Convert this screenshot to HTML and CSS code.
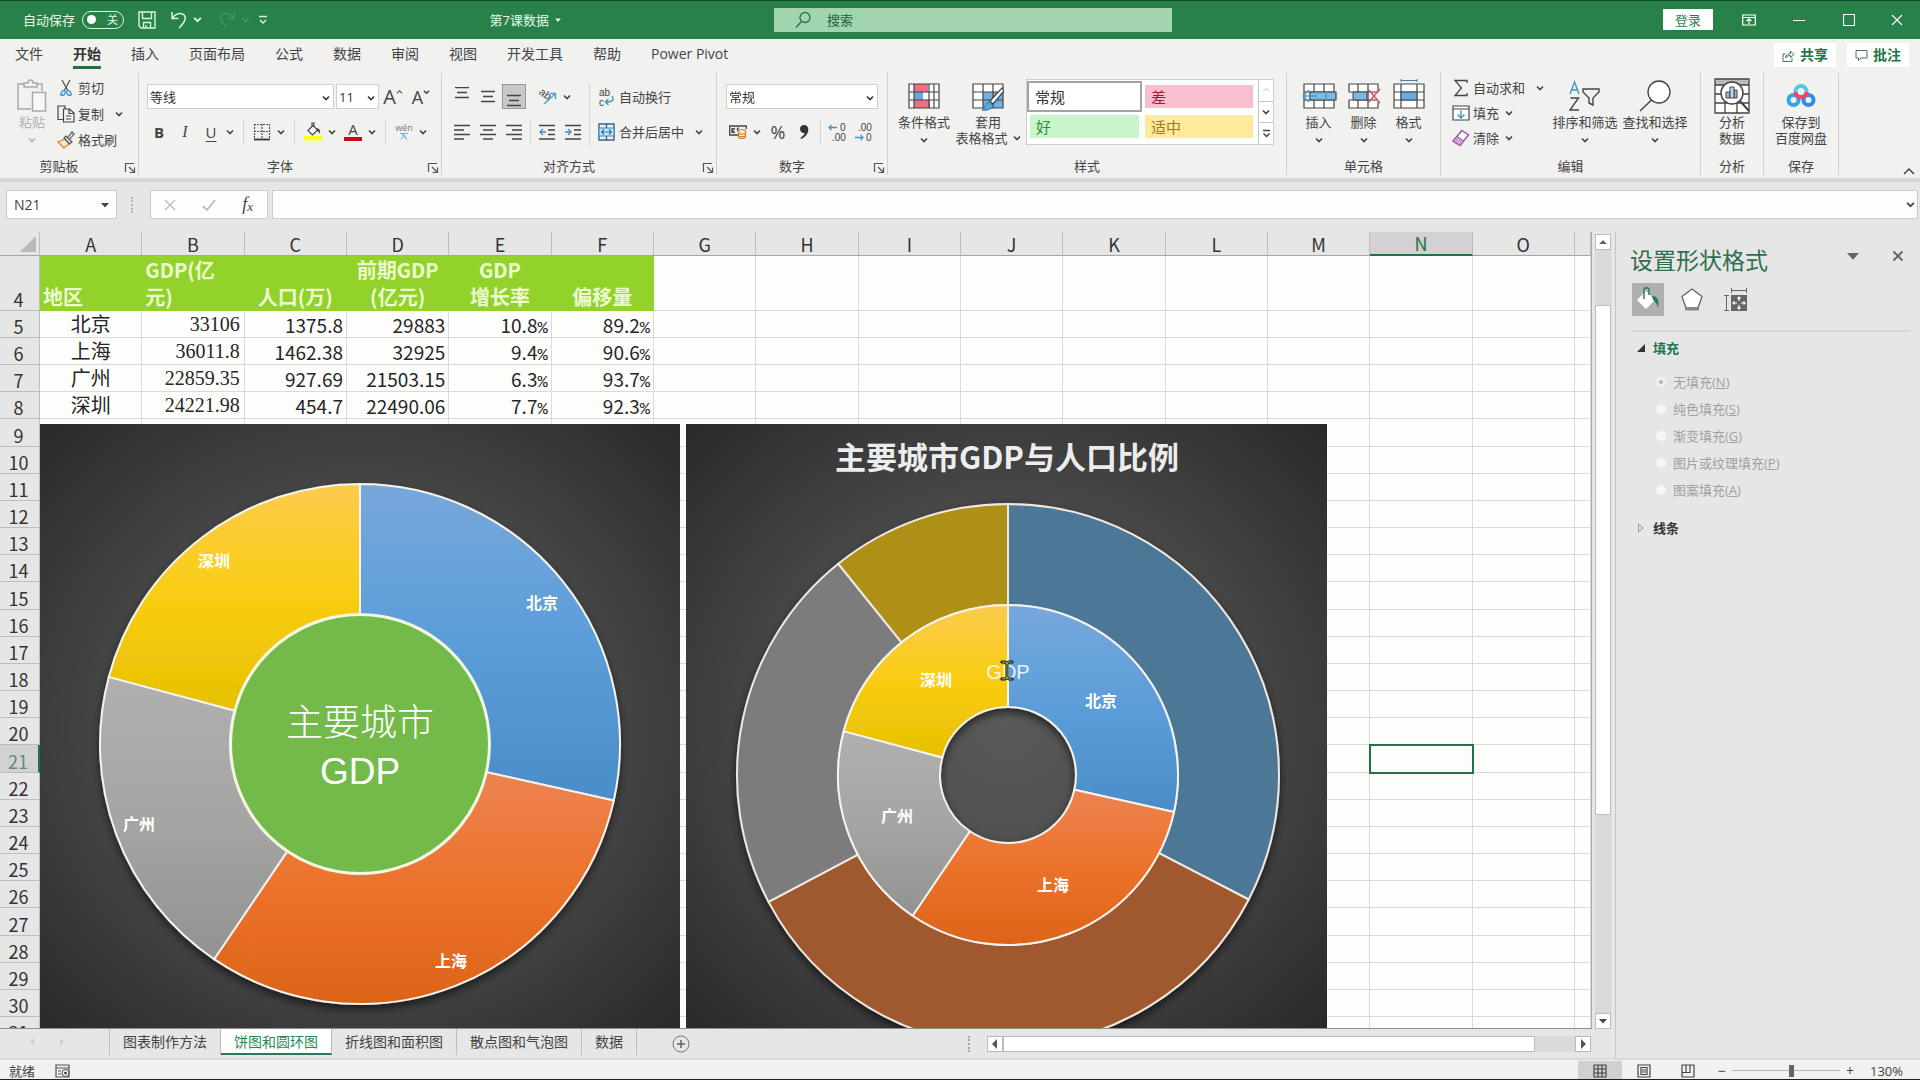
FILE: index.html
```html
<!DOCTYPE html>
<html lang="zh-CN">
<head>
<meta charset="utf-8">
<title>第7课数据</title>
<link rel="stylesheet" href="styles.css">
</head>
<body>
<svg class="sprite" aria-hidden="true">
  <symbol id="caret" viewBox="0 0 8 8"><path d="M1 2.500 4 5.500 7 2.500" fill="none" stroke="currentColor" stroke-width="1.600"/></symbol>
  <symbol id="tri" viewBox="0 0 8 8"><path d="M0 2h8L4 6.500z" fill="currentColor"/></symbol>
  <symbol id="launch" viewBox="0 0 12 12"><path d="M1.500 10V1.500H10M5 5l5 5M10.500 5.500v5h-5" fill="none" stroke="#555" stroke-width="1.200"/></symbol>
  <symbol id="al-top" viewBox="0 0 16 16"><path d="M1 2.500h14M3 7.500h10M1 12.500h14" stroke="#444" stroke-width="1.300"/></symbol>
</svg>

<header class="titlebar">
  <div class="quick">
    <label for="autosave">自动保存</label>
    <span class="toggle"><input type="checkbox" id="autosave"><span>关</span></span>
    <button class="tb-btn" aria-label="保存"><svg width="18" height="18" viewBox="0 0 18 18"><path d="M1 1h16v16H3l-2-2zM4.500 1v6.500h9V1M5.500 17v-5.500h7V17M8 17v-3" fill="none" stroke="#d9f5e0" stroke-width="1.400"/></svg></button>
    <button class="tb-btn undo" aria-label="撤消"><svg width="18" height="18" viewBox="0 0 18 18"><path d="M2 1v6.500h6.500M2 7.500C5 3 10 1 13.500 3.500c3.500 3 1.500 8-4.500 13.500" fill="none" stroke="#d9f5e0" stroke-width="1.500"/></svg><svg width="9" height="9"><use href="#caret"/></svg></button>
    <button class="tb-btn redo" aria-label="恢复" disabled><svg width="18" height="18" viewBox="0 0 18 18"><path d="M16 1v6.500H9.500M16 7.500C13 3 8 1 4.500 3.500c-3.500 3-1.500 8 4.500 13.500" fill="none" stroke="#3f9560" stroke-width="1.500"/></svg><svg width="9" height="9"><use href="#caret"/></svg></button>
    <button class="tb-btn" aria-label="自定义"><svg width="10" height="10" viewBox="0 0 10 10"><path d="M1 1.500h8M2 5l3 3 3-3" fill="none" stroke="#d9f5e0" stroke-width="1.400"/></svg></button>
  </div>
  <button class="doc">第7课数据 <svg width="6" height="6"><use href="#tri"/></svg></button>
  <div class="search">
    <svg width="16" height="18" viewBox="0 0 16 18"><circle cx="10" cy="6.500" r="5" fill="none" stroke="#2f6f48" stroke-width="1.300"/><path d="M6.500 10.500 1 16.500" stroke="#2f6f48" stroke-width="1.300"/></svg>
    <input type="search" placeholder="搜索" aria-label="搜索">
  </div>
  <div class="window">
    <button class="login">登录</button>
    <button class="win" aria-label="功能区显示选项"><svg width="14" height="12" viewBox="0 0 14 12"><path d="M.700 1h12.600v10H.700zM.700 3.500h12.600M7 10V5M4.500 7 7 4.800 9.500 7" fill="none" stroke="#fff" stroke-width="1.200"/></svg></button>
    <button class="win" aria-label="最小化"><svg width="12" height="12"><path d="M0 6.500h12" stroke="#fff"/></svg></button>
    <button class="win" aria-label="最大化"><svg width="12" height="12"><path d="M.5.5h11v11H.5z" fill="none" stroke="#fff" stroke-width="1.200"/></svg></button>
    <button class="win" aria-label="关闭"><svg width="12" height="12"><path d="M1 1l10 10M11 1 1 11" stroke="#fff" stroke-width="1.200"/></svg></button>
  </div>
</header>

<nav class="tabs">
  <a href="#">文件</a><a href="#" class="on">开始</a><a href="#">插入</a><a href="#">页面布局</a><a href="#">公式</a><a href="#">数据</a><a href="#">审阅</a><a href="#">视图</a><a href="#">开发工具</a><a href="#">帮助</a><a href="#">Power Pivot</a>
  <div class="collab">
    <button><svg width="13" height="13" viewBox="0 0 13 13"><path d="M3.500 5H1v7.500h9V9M3.500 9c.5-3 2.500-4.500 5-4.500V2L12 5.500 8.500 8.500V6.500C6.500 6.500 5 7 3.500 9z" fill="none" stroke="#44795a"/></svg>共享</button>
    <button><svg width="13" height="13" viewBox="0 0 13 13"><path d="M1 1.500h11v7.500H6L3.500 11.500V9H1z" fill="none" stroke="#44795a"/></svg>批注</button>
  </div>
</nav>

<section class="ribbon">
  <div class="group g-clip">
    <div class="body high">
      <button class="big off"><svg width="32" height="34" viewBox="0 0 32 34"><path d="M8 5H2v25h13M20 5h6v7M8 8V4h4c0-4 5-4 5 0h4v4z" fill="none" stroke="#a9a9a9" stroke-width="1.500"/><path d="M16.500 13.500h13V32h-13z" fill="#f7f7f7" stroke="#a9a9a9" stroke-width="1.500"/></svg><span>粘贴</span><svg width="8" height="16" class="c"><use href="#caret"/></svg></button>
      <div class="stack">
        <button><svg width="18" height="18" viewBox="0 0 18 18"><path d="M5 1l6 11M13 1 7 12" stroke="#555" stroke-width="1.300"/><path d="M7.500 11.500a2.500 2.500 0 1 1-4 4l1.500-3.500zM10.500 11.500a2.500 2.500 0 1 0 4 4l-1.500-3.500z" fill="#cfe5f5" stroke="#3f8fcb" stroke-width="1.200"/></svg>剪切</button>
        <button><svg width="18" height="18" viewBox="0 0 18 18"><path d="M6 14.500H1V1h7v3M6.500 4h6l4.500 4v9H6.500zM12 4v4.500h5M9 11h5M9 14h5" fill="none" stroke="#444" stroke-width="1.200"/></svg>复制<svg width="8" height="8" class="far"><use href="#caret"/></svg></button>
        <button><svg width="18" height="18" viewBox="0 0 18 18"><path d="M1 11l7-3 4 5-5 4z" fill="#fbe7c4" stroke="#d08a2e" stroke-width="1.300"/><path d="M7 7l2-2 6 6-2.500 2zM11 6l4-5 2 2-4 5" fill="#ddd" stroke="#555" stroke-width="1.200"/></svg>格式刷</button>
      </div>
    </div>
    <div class="cap"><span>剪贴板</span><svg width="12" height="12"><use href="#launch"/></svg></div>
  </div>

  <div class="group g-font">
    <div class="body rows">
      <div class="row">
        <span class="combo face"><select aria-label="字体"><option>等线</option></select><svg width="8" height="8"><use href="#caret"/></svg></span>
        <span class="combo size"><select aria-label="字号"><option>11</option></select><svg width="8" height="8"><use href="#caret"/></svg></span>
        <button class="ib glyph l" aria-label="增大字号">A<svg width="7" height="8" viewBox="0 0 8 8"><path d="M1 5.500 4 2.500 7 5.500" fill="none" stroke="#555" stroke-width="1.300"/></svg></button>
        <button class="ib glyph" aria-label="减小字号">A<svg width="7" height="8"><use href="#caret"/></svg></button>
      </div>
      <div class="row">
        <button class="ib bold">B</button><button class="ib ital">I</button><button class="ib und">U</button><button class="cb" aria-label="下划线选项"><svg width="8" height="8"><use href="#caret"/></svg></button>
        <i class="sep"></i>
        <button class="ib" aria-label="边框"><svg width="18" height="18" viewBox="0 0 18 18"><path d="M1.500 1v15M16.500 1v15M1 1.500h16M9 1v15M1 8.500h16" stroke="#555" stroke-width="1.200" stroke-dasharray="2 1"/><path d="M1 16.500h16" stroke="#333" stroke-width="1.800"/></svg></button><button class="cb" aria-label="边框选项"><svg width="8" height="8"><use href="#caret"/></svg></button>
        <i class="sep"></i>
        <button class="ib" aria-label="填充颜色"><svg width="18" height="19" viewBox="0 0 18 19"><path d="M4 8.500 9 3.500l4.500 4.500-5 5zM8 5V1h2v4" fill="#fff" stroke="#444" stroke-width="1.200"/><path d="M13 6c3 1 3.500 3 3 6-1-2-2-3-3-3z" fill="#444"/><path d="M0 14h18v4.500H0z" fill="#fdfd1c"/></svg></button><button class="cb" aria-label="填充颜色选项"><svg width="8" height="8"><use href="#caret"/></svg></button>
        <button class="ib color" aria-label="字体颜色">A</button><button class="cb" aria-label="字体颜色选项"><svg width="8" height="8"><use href="#caret"/></svg></button>
        <i class="sep"></i>
        <button class="ib wen" aria-label="拼音指南">wén<svg width="10" height="8" viewBox="0 0 10 8"><path d="M1 1.500h8M2 7.500l3-5 3 5M3 2l4 5" stroke="#72b5d8" fill="none"/></svg></button><button class="cb" aria-label="拼音选项"><svg width="8" height="8"><use href="#caret"/></svg></button>
      </div>
    </div>
    <div class="cap"><span>字体</span><svg width="12" height="12"><use href="#launch"/></svg></div>
  </div>

  <div class="group g-align">
    <div class="body">
      <div class="rows">
        <div class="row">
          <button class="ib" aria-label="顶端对齐"><svg width="16" height="20"><use href="#al-top" y="-4"/></svg></button>
          <button class="ib" aria-label="垂直居中"><svg width="16" height="16"><use href="#al-top"/></svg></button>
          <button class="ib pressed" aria-label="底端对齐"><svg width="16" height="20"><use href="#al-top" y="4"/></svg></button>
          <button class="ib orient" aria-label="方向"><svg class="lettered" width="20" height="18" viewBox="0 0 20 18"><text x="1" y="9" font-size="11" transform="rotate(35 6 6)">ab</text><path d="M6 16 17 6M12 5.500h5.500V11" fill="none" stroke="#4da3c9" stroke-width="1.400"/></svg></button><button class="cb" aria-label="方向选项"><svg width="8" height="8"><use href="#caret"/></svg></button>
        </div>
        <div class="row">
          <button class="ib" aria-label="左对齐"><svg width="16" height="16"><path d="M0 1.500h16M0 6h10M0 10.500h16M0 15h10" stroke="#444" stroke-width="1.300"/></svg></button>
          <button class="ib" aria-label="居中"><svg width="16" height="16"><path d="M0 1.500h16M3 6h10M0 10.500h16M3 15h10" stroke="#444" stroke-width="1.300"/></svg></button>
          <button class="ib" aria-label="右对齐"><svg width="16" height="16"><path d="M0 1.500h16M6 6h10M0 10.500h16M6 15h10" stroke="#444" stroke-width="1.300"/></svg></button>
          <i class="sep tight"></i>
          <button class="ib" aria-label="减少缩进量"><svg width="16" height="16"><path d="M0 1.500h16M9 6h7M9 10.500h7M0 15h16" stroke="#444" stroke-width="1.300"/><path d="M7 8H1M4 5 1 8l3 3" stroke="#3f97c4" stroke-width="1.400" fill="none"/></svg></button>
          <button class="ib" aria-label="增加缩进量"><svg width="16" height="16"><path d="M0 1.500h16M9 6h7M9 10.500h7M0 15h16" stroke="#444" stroke-width="1.300"/><path d="M0 8h6M3 5l3 3-3 3" stroke="#3f97c4" stroke-width="1.400" fill="none"/></svg></button>
        </div>
      </div>
      <i class="sep tall"></i>
      <div class="rows">
        <button class="wide"><svg class="lettered" width="17" height="20" viewBox="0 0 17 20"><text x="1" y="9" font-size="10">ab</text><text x="1" y="19" font-size="10">c</text><path d="M14 9c3 5-1 6-6 6M10.500 12l-3 3 3 3" fill="none" stroke="#3f97c4" stroke-width="1.400"/></svg>自动换行</button>
        <button class="wide"><svg width="17" height="18" viewBox="0 0 17 18"><path d="M1 1h15v16H1zM8.500 1v4M8.500 13v4" fill="none" stroke="#3b6580" stroke-width="1.400"/><path d="M1 5h15v8H1z" fill="#cfe8f6" stroke="#2e85b5"/><path d="M3.500 9h10M6 6.500 3.500 9 6 11.500M11 6.500 13.500 9 11 11.500" fill="none" stroke="#2477a5" stroke-width="1.200"/></svg>合并后居中<svg width="8" height="8" class="far"><use href="#caret"/></svg></button>
      </div>
    </div>
    <div class="cap"><span>对齐方式</span><svg width="12" height="12"><use href="#launch"/></svg></div>
  </div>

  <div class="group g-num">
    <div class="body rows">
      <div class="row"><span class="combo fmt"><select aria-label="数字格式"><option>常规</option></select><svg width="8" height="8"><use href="#caret"/></svg></span></div>
      <div class="row">
        <button class="ib" aria-label="会计数字格式"><svg width="18" height="17" viewBox="0 0 18 17"><path d="M9 12H.700V3h16.600v3M6 5.500c-3 0-3 4 0 4M10 5c-2 0-2 2-1 3M3 5v5" fill="none" stroke="#444" stroke-width="1.300"/><path d="M9.500 8c0-2 7-2 7 0v6c0 2-7 2-7 0zM9.500 10c1 1.500 6 1.500 7 0M9.500 12.500c1 1.500 6 1.500 7 0" fill="#fbe3bf" stroke="#cf8430" stroke-width="1.200"/></svg></button><button class="cb" aria-label="会计格式选项"><svg width="8" height="8"><use href="#caret"/></svg></button>
        <button class="ib pc">%</button>
        <button class="ib" aria-label="千位分隔样式"><svg width="10" height="16" viewBox="0 0 10 16"><path d="M5 1c3 0 4.500 2 4.300 5C9 10 6 13.500 2 15l-.5-1.200C4 12 5.500 10.500 5.500 9 3 9.200 1 7.500 1 5s1.800-4 4-4z" fill="#333"/></svg></button>
        <i class="sep tight"></i>
        <button class="ib" aria-label="增加小数位数"><svg class="lettered" width="18" height="20" viewBox="0 0 18 20"><text x="12" y="9" font-size="10">0</text><text x="4" y="19" font-size="10">.00</text><path d="M9 5.500H1M3.500 3 1 5.500 3.500 8" fill="none" stroke="#3f97c4" stroke-width="1.300"/></svg></button>
        <button class="ib" aria-label="减少小数位数"><svg class="lettered" width="18" height="20" viewBox="0 0 18 20"><text x="4" y="9" font-size="10">.00</text><text x="12" y="19" font-size="10">0</text><path d="M1 15.500h8M6.500 13 9 15.500 6.500 18" fill="none" stroke="#3f97c4" stroke-width="1.300"/></svg></button>
      </div>
    </div>
    <div class="cap"><span>数字</span><svg width="12" height="12"><use href="#launch"/></svg></div>
  </div>

  <div class="group g-style">
    <div class="body high">
      <button class="big"><svg width="32" height="26" viewBox="0 0 32 26"><path d="M1 1h30v24H1z" fill="#fff"/><path d="M6 1h14v8H6zM6 17h16v8H6z" fill="#ef7083"/><path d="M6 9h9v8H6z" fill="#6da9dc"/><path d="M1 1h30v24H1zM1 9h30M1 17h30M6 1v24M21 1v24M26 1v24" fill="none" stroke="#444" stroke-width="1.200"/></svg><span>条件格式</span><svg width="8" height="16" class="c"><use href="#caret"/></svg></button>
      <button class="big"><svg width="32" height="30" viewBox="0 0 32 30"><path d="M1 3h30v24H1z" fill="#fff"/><path d="M11 11h20v16H11z" fill="#72b0e2"/><path d="M1 3h30v24H1zM1 11h30M1 19h30M11 3v24M21 3v24" fill="none" stroke="#444" stroke-width="1.200"/><path d="M18 20 30 7l2 3-11 13z" fill="#fff" stroke="#444" stroke-width="1.200"/><path d="M10 29c3 0 2-6 7-8l4 3c0 4-6 6-11 5z" fill="#5aa5dc" stroke="#2d77ae"/></svg><span>套用</span><span>表格格式<svg width="8" height="8"><use href="#caret"/></svg></span></button>
      <div class="gallery">
        <div class="styles"><button class="normal">常规</button><button class="bad">差</button><button class="good">好</button><button class="neutral">适中</button></div>
        <div class="more"><button disabled aria-label="上一行"><svg width="8" height="8" viewBox="0 0 8 8"><path d="M1 5.500 4 2.500 7 5.500" fill="none" stroke="#bbb"/></svg></button><button aria-label="下一行"><svg width="8" height="8"><use href="#caret"/></svg></button><button aria-label="其他"><svg width="9" height="10" viewBox="0 0 9 10"><path d="M1 1.500h7M1.500 4.500l3 3 3-3" fill="none" stroke="#444" stroke-width="1.500"/></svg></button></div>
      </div>
    </div>
    <div class="cap solo"><span>样式</span></div>
  </div>

  <div class="group g-cells">
    <div class="body high">
      <button class="big"><svg width="36" height="26" viewBox="0 0 36 26"><path d="M3 1h30v24H3zM3 9h30M3 17h30M13 1v24M23 1v24" fill="#fff" stroke="#444" stroke-width="1.200"/><path d="M9 9h26v8H9z" fill="#7cb8e6" stroke="#444" stroke-width="1.200"/><path d="M16 13H2M8 7l-6 6 6 6M25 9v8" fill="none" stroke="#4a9bc8" stroke-width="1.500"/></svg><span>插入</span><svg width="8" height="16" class="c"><use href="#caret"/></svg></button>
      <button class="big"><svg width="34" height="26" viewBox="0 0 34 26"><path d="M2 9V1h29v8M2 17v8h29v-6M11 1v24M21 1v24M2 9h29M2 17h29" fill="#fff" stroke="#444" stroke-width="1.200"/><path d="M6 9h14v8H6z" fill="#7cb8e6" stroke="#444"/><path d="M21 6l12 14M33 6 21 20" stroke="#e0576b" stroke-width="1.600"/></svg><span>删除</span><svg width="8" height="16" class="c"><use href="#caret"/></svg></button>
      <button class="big"><svg width="32" height="34" viewBox="0 0 32 34"><path d="M1 5h30v24H1zM1 13h30M1 21h30M8 5v24M24 5v24" fill="#fff" stroke="#444" stroke-width="1.200"/><path d="M8 13h16v8H8z" fill="#69abe0" stroke="#444"/><path d="M8 1.500h16M8 0v3M24 0v3" stroke="#4a7fa5"/></svg><span>格式</span><svg width="8" height="16" class="c"><use href="#caret"/></svg></button>
    </div>
    <div class="cap solo"><span>单元格</span></div>
  </div>

  <div class="group g-edit">
    <div class="body high">
      <div class="stack">
        <button><svg width="18" height="18" viewBox="0 0 18 18"><path d="M15 4V1.500H3L9.500 9 3 16.500h12V14" fill="none" stroke="#444" stroke-width="1.300"/></svg>自动求和<svg width="8" height="8" class="far"><use href="#caret"/></svg></button>
        <button><svg width="18" height="16" viewBox="0 0 18 16"><path d="M1 1h16v14H1zM1 4h16" fill="#fff" stroke="#444" stroke-width="1.200"/><path d="M9 5.500V13M5.500 9.500 9 13l3.500-3.500" fill="none" stroke="#3f97c4" stroke-width="1.400"/></svg>填充<svg width="8" height="8" class="near"><use href="#caret"/></svg></button>
        <button><svg width="18" height="18" viewBox="0 0 18 18"><path d="M10 1.500 16.500 6 8 16.500 1 12z" fill="#fff" stroke="#97539e" stroke-width="1.400"/><path d="M5 7.500 12 12 8 16.500 1 12z" fill="#d9a0de" stroke="#97539e"/></svg>清除<svg width="8" height="8" class="near"><use href="#caret"/></svg></button>
      </div>
      <button class="big lg"><svg width="34" height="30" viewBox="0 0 34 30"><path d="M2 13 6.500 1 11 13M3.500 9h6" fill="none" stroke="#3f97c4" stroke-width="1.400"/><path d="M2.500 17h8L2 29h9M15 8h16v3l-6 6v7l-4-2v-5l-6-6z" fill="none" stroke="#444" stroke-width="1.400"/></svg><span>排序和筛选</span><svg width="8" height="16" class="c"><use href="#caret"/></svg></button>
      <button class="big lg"><svg width="32" height="32" viewBox="0 0 32 32"><circle cx="20" cy="12" r="11" fill="#fff" stroke="#444" stroke-width="1.300"/><path d="M12.500 20 1 31" stroke="#444" stroke-width="1.500"/></svg><span>查找和选择</span><svg width="8" height="16" class="c"><use href="#caret"/></svg></button>
    </div>
    <div class="cap solo"><span>编辑</span></div>
  </div>

  <div class="group g-ana">
    <div class="body high"><button class="big"><svg width="36" height="36" viewBox="0 0 36 36"><path d="M1 1h34v34H1z" fill="#fff"/><path d="M1 1h34v6H1z" fill="#bbb"/><path d="M1 1h34v34H1zM1 7h34M1 16h34M1 25h34M11 7v28M23 7v28" fill="none" stroke="#444" stroke-width="1.300"/><circle cx="18" cy="15" r="11" fill="#fff" stroke="#444" stroke-width="1.500"/><path d="M12 20v-6h4v6zM20 20v-8h3v8z" fill="#8bbce0" stroke="#444"/><path d="M16 20V9h4v11z" fill="#b9d8ee" stroke="#444"/><path d="M26 23l9 10" stroke="#444" stroke-width="2"/></svg><span>分析</span><span>数据</span></button></div>
    <div class="cap solo"><span>分析</span></div>
  </div>
  <div class="group g-save">
    <div class="body high"><button class="big"><svg width="30" height="26" viewBox="0 0 30 26"><g fill="none" stroke-width="4"><circle cx="7.500" cy="17" r="5" stroke="#2da9e0"/><circle cx="22.500" cy="17" r="5" stroke="#2b8fe6"/><circle cx="15" cy="8.500" r="5.500" stroke="#52c8e8"/><path d="M9.500 9c0 7 11 7 11 0" stroke="#ea4a6a"/></g></svg><span>保存到</span><span>百度网盘</span></button></div>
    <div class="cap solo"><span>保存</span></div>
  </div>
  <button class="collapse" aria-label="折叠功能区"><svg width="12" height="8" viewBox="0 0 12 8"><path d="M1 7l5-5 5 5" fill="none" stroke="#444" stroke-width="1.500"/></svg></button>
</section>

<section class="formula">
  <div class="namebox"><input value="N21" aria-label="名称框"><svg width="8" height="8"><use href="#tri"/></svg></div>
  <span class="dots"></span>
  <div class="fx">
    <button aria-label="取消" disabled><svg width="12" height="12"><path d="M1 1l10 10M11 1 1 11" stroke="#bbb" stroke-width="1.400"/></svg></button>
    <button aria-label="输入" disabled><svg width="14" height="12"><path d="M1 7l4 4 8-10" fill="none" stroke="#bbb" stroke-width="1.800"/></svg></button>
    <button aria-label="插入函数"><em>f</em><small>x</small></button>
  </div>
  <div class="entry"><input aria-label="编辑栏"><svg width="9" height="9"><use href="#caret"/></svg></div>
</section>

<main class="work">
  <div class="book">
    <div class="sheet">
      <div class="canvas">
        <table class="grid">
          <colgroup id="cols"></colgroup>
          <thead><tr id="letters"></tr></thead>
          <tbody id="rows"></tbody>
        </table>
        <svg class="chart one" id="chart1" viewBox="0 0 640 604" role="img" aria-label="主要城市GDP"></svg>
        <svg class="chart two" id="chart2" viewBox="0 0 641 604" role="img" aria-label="主要城市GDP与人口比例"></svg>
      </div>
      <div class="vscroll"><button aria-label="向上"><svg width="8" height="8" viewBox="0 0 8 8"><path d="M0 6h8L4 2z" fill="#666"/></svg></button><div class="vtrack"><span></span></div><button aria-label="向下"><svg width="8" height="8"><use href="#tri"/></svg></button></div>
    </div>
    <div class="sheets">
      <div class="nav"><button disabled aria-label="上一张"><svg width="6" height="8"><path d="M5 0v8L1 4z" fill="#cfcfcf"/></svg></button><button disabled aria-label="下一张"><svg width="6" height="8"><path d="M1 0v8l4-4z" fill="#cfcfcf"/></svg></button></div>
      <div class="names"><a href="#">图表制作方法</a><a href="#" class="on">饼图和圆环图</a><a href="#">折线图和面积图</a><a href="#">散点图和气泡图</a><a href="#">数据</a></div>
      <button class="add" aria-label="新工作表"><svg width="18" height="18" viewBox="0 0 18 18"><circle cx="9" cy="9" r="8" fill="none" stroke="#777"/><path d="M9 5v8M5 9h8" stroke="#666" stroke-width="1.600"/></svg></button>
      <span class="dots"></span>
      <div class="hscroll"><button aria-label="向左"><svg width="8" height="10"><path d="M6 0v10L1 5z" fill="#555"/></svg></button><div class="htrack"><span></span></div><button aria-label="向右"><svg width="8" height="10"><path d="M2 0v10l5-5z" fill="#555"/></svg></button></div>
    </div>
  </div>

  <aside class="pane">
    <div class="pane-head"><h2>设置形状格式</h2><button aria-label="任务窗格选项"><svg width="12" height="12"><use href="#tri"/></svg></button><button aria-label="关闭窗格"><svg width="12" height="12"><path d="M1.500 1.500l9 9M10.500 1.500l-9 9" stroke="#666" stroke-width="2"/></svg></button></div>
    <div class="pane-tabs">
      <button class="on" aria-label="填充与线条"><svg width="26" height="26" viewBox="0 0 26 26"><path d="M2 13 11 4l9 9-9 9z" fill="#fff"/><path d="M9 12V3c0-3 5-3 5 0v5" fill="none" stroke="#2e7d57" stroke-width="1.500"/><path d="M17 9c5 0 8 3 6 12-1-4-3-7-5-8z" fill="#2e7d57"/></svg></button>
      <button aria-label="效果"><svg width="24" height="26" viewBox="0 0 24 26"><path d="M12 2 22 9.500 18 21H6L2 9.500z" fill="#fff" stroke="#666" stroke-width="1.300"/><path d="M5 22.500h14" stroke="#888" stroke-width="2"/></svg></button>
      <button aria-label="大小与属性"><svg width="24" height="26" viewBox="0 0 24 26"><path d="M7 8h16v16H7z" fill="#666"/><path d="M15 10v4M15 18v4M9 16h4M17 16h4M13.500 11.500 15 10l1.500 1.500M13.500 20.500 15 22l1.500-1.500M10.500 14.500 9 16l1.500 1.500M19.500 14.500 21 16l-1.500 1.500" fill="none" stroke="#fff" stroke-width="1.200"/><path d="M8 3.500h15M7.500 1v5M22.500 1v5M2.500 9v15M0 8.500h5M0 23.500h5" stroke="#666"/></svg></button>
    </div>
    <h3 class="fill"><svg width="8" height="8"><path d="M8 0v8H0z" fill="#333"/></svg>填充</h3>
    <div class="choices">
      <label><input type="radio" name="fill" checked disabled>无填充(<u>N</u>)</label>
      <label><input type="radio" name="fill" disabled>纯色填充(<u>S</u>)</label>
      <label><input type="radio" name="fill" disabled>渐变填充(<u>G</u>)</label>
      <label><input type="radio" name="fill" disabled>图片或纹理填充(<u>P</u>)</label>
      <label><input type="radio" name="fill" disabled>图案填充(<u>A</u>)</label>
    </div>
    <h3><svg width="8" height="10"><path d="M1.500 1v8L6 5z" fill="none" stroke="#999"/></svg>线条</h3>
  </aside>
</main>

<footer class="status">
  <span>就绪</span>
  <button class="rec" aria-label="录制宏"><svg width="15" height="14" viewBox="0 0 15 14"><path d="M1 1h13v12H1zM1 4h13M3 7h3M3 10h3" fill="none" stroke="#555" stroke-width="1.200"/><circle cx="10.500" cy="9" r="3.500" fill="#fff" stroke="#444"/><circle cx="10.500" cy="9" r="1.500" fill="#444"/></svg></button>
  <div class="views">
    <button class="on" aria-label="普通"><svg width="14" height="14"><path d="M1 1h12v12H1zM1 5h12M1 9h12M5 1v12M9 1v12" fill="none" stroke="#444" stroke-width="1.200"/></svg></button>
    <button aria-label="页面布局"><svg width="14" height="14"><path d="M1 1h12v12H1zM4 3.500h6v7H4zM5 6h4M5 8h4" fill="none" stroke="#444" stroke-width="1.200"/></svg></button>
    <button aria-label="分页预览"><svg width="14" height="14"><path d="M1 1h12v12H1zM1 8.500h8V1M5 1v7" fill="none" stroke="#444" stroke-width="1.200"/></svg></button>
  </div>
  <div class="zoom"><button aria-label="缩小">−</button><input type="range" min="0" max="100" value="55" aria-label="显示比例"><button aria-label="放大">+</button><span>130%</span></div>
</footer>
<script src="app.js"></script>
</body>
</html>
```
FILE: styles.css
```css
* { box-sizing: border-box; }
html, body { height: 100%; margin: 0; }
body {
  display: flex; flex-direction: column; overflow: hidden;
  background: #e6e6e6; color: #444; border-bottom: 1px solid #1b1f1d;
  font: 13px/16px "Open Sans", "Noto Sans CJK SC", sans-serif;
}
button, input, select { font: inherit; color: inherit; margin: 0; }
button { display: inline-flex; align-items: center; justify-content: center; padding: 0; border: 0; background: none; white-space: nowrap; }
a { color: inherit; text-decoration: none; }
svg { flex: none; display: block; }
.sprite { position: absolute; width: 0; height: 0; }
.lettered { overflow: visible; fill: #444; font-family: "Liberation Sans", sans-serif; }

.titlebar { display: grid; grid-template-columns: 774px minmax(200px, 398px) 1fr; align-items: center; height: 39px; flex: none; background: #288148; border-top: 1px solid #0c4a2c; border-bottom: 1px solid #35774f; color: #e4f8e8; }
.quick { grid-area: 1 / 1; display: flex; align-items: center; padding-left: 23px; color: #e4f8e8; }
.toggle { display: flex; align-items: center; width: 42px; height: 18px; margin: 0 14px 0 7px; padding: 0 5px 0 4px; border: 1px solid #d9f5e0; border-radius: 9px; justify-content: space-between; font-size: 11px; }
.toggle input { appearance: none; width: 9px; height: 9px; border-radius: 50%; background: #fff; }
.tb-btn { margin-right: 14px; gap: 4px; }
.tb-btn.undo { margin-right: 16px; gap: 5px; }
.tb-btn.redo { margin-right: 8px; color: #3f9560; gap: 5px; }
.doc { grid-area: 1 / 1; justify-self: end; margin-right: 213px; gap: 6px; }
.search { display: flex; align-items: center; height: 24px; padding-left: 21px; gap: 16px; background: #a0d5af; color: #22613c; }
.search input { flex: 1; min-width: 0; border: 0; background: none; padding: 0; outline: 0; }
.search input::placeholder { color: #22613c; opacity: 1; }
.window { display: flex; justify-content: flex-end; align-items: center; }
.login { width: 50px; height: 21px; background: #fff; color: #2f7a4c; margin-right: 11px; }
.win { width: 50px; height: 24px; }
.win:last-child { width: 46px; }

.tabs { display: flex; gap: 30px; height: 34px; flex: none; padding: 0 11px 0 15px; background: #f1f1f0; font-size: 14px; line-height: 20px; }
.tabs a { padding-top: 5px; height: 30px; white-space: nowrap; }
.tabs a.on { font-weight: 700; color: #333; border-bottom: 3px solid #2b6e49; }
.collab { margin-left: auto; display: flex; gap: 11px; padding-top: 4px; }
.collab button { width: 62px; height: 24px; gap: 5px; background: #fff; color: #22744a; font-weight: 700; }

.ribbon { display: flex; height: 105px; flex: none; background: #f1f1f0; }
.group { display: flex; flex-direction: column; position: relative; flex: none; border-right: 1px solid #cfcfcf; margin-bottom: 3px; }
.body { display: flex; height: 84px; padding-top: 11px; }
.body.high { padding-top: 3px; }
.rows { display: flex; flex-direction: column; gap: 10px; }
.row { display: flex; align-items: center; gap: 2px; height: 25px; }
.cap { display: flex; height: 18px; padding-right: 2px; align-items: center; color: #444; }
.cap span { flex: 1; text-align: center; }
.cap svg { margin: 4px 0 0 6px; }
.cap.solo { padding-right: 0; }
.g-clip { width: 139px; } .g-clip .body { padding-left: 10px; }
.g-font { width: 303px; } .g-font .body { padding-left: 8px; }
.g-align { width: 275px; } .g-align .body { padding-left: 8px; }
.g-num { width: 171px; } .g-num .body { padding-left: 9px; }
.g-style { width: 399px; } .g-style .body { padding-left: 4px; }
.g-cells { width: 154px; } .g-cells .body { padding-left: 9px; }
.g-edit { width: 260px; } .g-edit .body { padding-left: 11px; gap: 2px; }
.g-ana { width: 63px; } .g-save { width: 75px; }
.g-ana .body, .g-save .body { justify-content: center; }
.big { width: 64px; height: 72px; margin-top: 2px; flex-direction: column; justify-content: flex-start; }
.big > svg:first-child { height: 36px; }
.big span { display: flex; align-items: center; gap: 5px; height: 16px; }
.g-clip .big { width: 44px; } .g-cells .big { width: 45px; } .big.lg { width: 68px; }
.big.off { color: #b2b2b2; }
.c { padding-top: 4px; overflow: visible; }
.stack { display: flex; flex-direction: column; gap: 1px; width: 97px; }
.g-clip .stack { margin-left: 3px; width: 70px; gap: 2px; }
.stack button { height: 24px; justify-content: flex-start; gap: 3px; }
.near { margin-left: 3px; }
.far { margin-left: auto; }
.stack .far { margin-right: 5px; }
.g-clip .stack .far { margin-right: 4px; }
.ib { width: 24px; height: 25px; flex: none; }
.cb { width: 14px; height: 25px; flex: none; margin-left: -2px; }
.sep { width: 1px; height: 24px; margin: 0 4px; background: #d4d4d4; }
.sep.tight { margin: 0 2px; }
.sep.tall { height: 62px; margin: 0 8px 0 4px; }
.combo { position: relative; display: block; height: 25px; background: #fff; border: 1px solid #d0d0d0; color: #333; }
.combo select { appearance: none; width: 100%; height: 100%; padding: 0 2px; border: 0; background: none; line-height: 20px; }
.combo svg { position: absolute; right: 3px; top: 9px; }
.face { width: 187px; } .size { width: 43px; } .fmt { width: 152px; }
.glyph { font-size: 18px; align-items: center; }
.glyph svg { align-self: flex-start; margin-top: 4px; }
.glyph.l { font-size: 20px; margin-right: 2px; }
.bold { font-weight: 700; font-size: 15px; }
.ital { font: italic 16px "Liberation Serif", serif; }
.und { text-decoration: underline; font-size: 15px; text-underline-offset: 3px; }
.color { font-size: 15px; height: 19px; width: 18px; margin: 0 3px; border-bottom: 4px solid #d0021b; line-height: 15px; }
.wen { flex-direction: column; font-size: 9px; line-height: 9px; color: #777; }
.pressed { background: #c8c8c8; border: 1px solid #989898; }
.orient { margin-left: 8px; }
.wide { width: 105px; height: 25px; justify-content: flex-start; gap: 4px; }
.pc { font-size: 18px; }
.gallery { display: flex; width: 248px; height: 66px; margin: 3px 0 0 6px; border: 1px solid #d0d0d0; background: #fff; }
.styles { flex: 1; display: grid; grid-template-columns: 115px 108px; grid-template-rows: 31px 23px; gap: 3px; padding-top: 1px; align-items: center; font-size: 15px; }
.styles button { justify-content: flex-start; height: 23px; padding-left: 6px; }
.styles .normal { height: 31px; border: 2px solid #a3a3a3; color: #333; padding-left: 6px; }
.styles .bad { background: #f8c0ce; color: #a01a3c; }
.styles .good { background: #c8f5cb; color: #3a8a3c; margin: 0 3px; }
.styles .neutral { background: #fdeb9a; color: #a07820; }
.more { width: 15px; display: flex; flex-direction: column; border-left: 1px solid #c4c4c4; }
.more button { flex: 1; border-bottom: 1px solid #c4c4c4; }
.more button:last-child { border-bottom: 0; }
.collapse { margin: 88px 4px 0 auto; align-self: flex-start; width: 14px; height: 20px; }

.formula { display: flex; height: 54px; flex: none; padding: 8px 2px 13px 6px; border-top: 4px solid #d5d5d5; }
.namebox, .fx, .entry { display: flex; align-items: center; background: #fdfdfb; border: 1px solid #cdcdcd; }
.namebox { width: 111px; padding: 0 7px; }
.namebox input, .entry input { flex: 1; min-width: 0; border: 0; background: none; padding: 0; outline: 0; font-size: 14px; }
.dots { width: 2px; height: 16px; margin: 7px 17px 0 14px; border-left: 2px dotted #b5b5b5; }
.fx { width: 118px; }
.fx button { flex: 1; height: 24px; }
.fx em { font: italic 18px "Liberation Serif", serif; }
.fx small { font: italic 13px "Liberation Serif", serif; padding-top: 4px; }
.entry { flex: 1; margin-left: 4px; padding-right: 2px; }

.work { display: flex; flex: 1; min-height: 0; }
.book { flex: 1; min-width: 0; display: flex; flex-direction: column; }
.sheet { display: flex; flex: 1; min-height: 0; }
.canvas { position: relative; flex: 1; min-width: 0; overflow: hidden; background: #fdfdfc; border-right: 1px solid #aaa; border-bottom: 1px solid #8f8f8f; }
.grid { width: 100%; table-layout: fixed; border-collapse: separate; border-spacing: 0; font-family: "Noto Sans CJK SC", sans-serif; font-size: 19px; line-height: 22px; color: #262626; }
.c-head { width: 40px; } .c-last { width: 16px; }
.grid td, .grid th { padding: 0; border-right: 1px solid #d9d9d9; border-bottom: 1px solid #d9d9d9; white-space: nowrap; overflow: hidden; }
.grid th { background: #e6e6e6; font-weight: 400; font-size: 18px; color: #333; border-color: #bdbdbd; }
.grid thead th { height: 24px; border-bottom-color: #a5a5a5; line-height: 20px; }
.grid thead th.on { background: #d2d2d2; color: #217346; border-bottom: 2px solid #217346; }
.grid thead th svg { margin-left: auto; margin-right: 3px; }
.grid tbody tr { height: 27px; }
.grid tbody tr:nth-child(6n) { height: 28px; }
.grid tbody tr.head { height: 55px; }
.grid tbody th { padding-right: 2px; line-height: 20px; vertical-align: bottom; padding-bottom: 1px; }
.grid tbody th.on { background: #d2d2d2; color: #5f8f74; border-right: 2px solid #217346; }
.grid td.hd { background: #92d22b; border-color: #92d22b; color: #ecfbd0; font-weight: 700; font-size: 20px; line-height: 27px; text-align: center; vertical-align: bottom; white-space: pre-line; }
.grid td.hd.left { text-align: left; padding-left: 3px; }
.grid td.city { text-align: center; font-size: 20px; }
.grid td.num { text-align: right; padding: 2px 3px 0 0; }
.grid td.song { text-align: right; padding-right: 4px; font: 20px/22px "Liberation Serif", serif; }
.pct { font: 17px/1 "Liberation Mono", monospace; }
.grid td.sel { outline: 2px solid #217346; outline-offset: -1px; }
.chart { position: absolute; top: 192px; height: 604px; font-family: "Liberation Sans", "Noto Sans CJK SC", sans-serif; }
.chart.one { left: 40px; width: 640px; }
.chart.two { left: 686px; width: 641px; }
.chart text { text-anchor: middle; fill: #fff; }
.chart .t-label { font-size: 16px; font-weight: 700; }
.chart .t-core { font-size: 37px; font-weight: 300; }
.chart .t-mini { font-size: 20px; fill-opacity: 0.85; }
.chart .t-title { font: 700 31px "Noto Sans CJK SC", sans-serif; fill-opacity: 0.92; }

.vscroll { width: 23px; padding: 2px 4px 0 3px; display: flex; flex-direction: column; }
.vscroll button, .hscroll button { width: 16px; height: 16px; background: #fff; border: 1px solid #bcbcbc; flex: none; }
.vtrack { flex: 1; background: #d9d9d9; display: flex; flex-direction: column; padding-top: 55px; }
.vtrack span { height: 72%; background: #fff; border: 1px solid #bcbcbc; }
.sheets { display: flex; height: 29px; flex: none; font-size: 14px; line-height: 20px; }
.nav { width: 110px; display: flex; gap: 24px; padding-left: 29px; border-right: 1px solid #bdbdbd; height: 26px; }
.names { display: flex; height: 26px; }
.names a { padding: 3px 13px 0 13px; border-right: 1px solid #bdbdbd; white-space: nowrap; }
.names a.on { background: #fff; color: #2b8a54; border-bottom: 2px solid #2b7a53; }
.add { margin: 5px 0 0 35px; height: 20px; }
.sheets .dots { margin: 7px 17px 0 auto; border-left-color: #a5a5a5; }
.hscroll { width: 38%; max-width: 604px; display: flex; margin: 7px 24px 0 0; height: 16px; flex: none; }
.htrack { flex: 1; display: flex; background: #d9d9d9; }
.htrack span { width: 93%; background: #fff; border: 1px solid #bcbcbc; }

.pane { width: 305px; flex: none; border-left: 1px solid #c6c6c6; padding: 13px 10px 0 16px; }
.pane-head { display: flex; align-items: center; height: 30px; }
.pane h2 { margin: 0 0 0 -2px; flex: 1; font-size: 23px; line-height: 30px; font-weight: 400; color: #2f6f4d; white-space: nowrap; }
.pane-head button { width: 24px; height: 22px; margin-bottom: 8px; color: #666; }
.pane-head button + button { margin-left: 21px; }
.pane-tabs { display: flex; gap: 12px; margin-top: 8px; padding-bottom: 14px; border-bottom: 2px solid #d6d6d6; }
.pane-tabs button { width: 32px; height: 33px; }
.pane-tabs button.on { background: #b0b0b0; }
.pane h3 { display: flex; align-items: center; gap: 8px; margin: 0 0 0 5px; font-size: 13px; line-height: 16px; color: #333; }
.pane h3.fill { color: #23774a; margin-top: 8px; }
.choices { display: flex; flex-direction: column; gap: 11px; padding: 18px 0 22px 24px; color: #a0a0a0; }
.choices label { display: flex; align-items: center; height: 16px; }
.choices input { appearance: none; width: 10px; height: 10px; margin-right: 7px; border-radius: 50%; background: #f6f6f5; }
.choices input:checked { background: #b3b3b3; border: 3px solid #f1f1f1; }

.status { display: flex; align-items: center; height: 21px; flex: none; background: #f1f1f0; border-top: 2px solid #dadada; padding: 2px 17px 0 9px; }
.rec { margin-left: 20px; }
.views { margin: 0 6px 0 auto; display: flex; }
.views button { width: 44px; height: 19px; }
.views .on { background: #d0d0d0; }
.zoom { display: flex; align-items: center; gap: 4px; font-size: 14px; }
.zoom button { width: 12px; }
.zoom input { appearance: none; width: 108px; height: 14px; background: linear-gradient(#b5b5b5, #b5b5b5) center / 100% 1px no-repeat; }
.zoom input::-webkit-slider-thumb { appearance: none; width: 5px; height: 12px; background: #666; }
.zoom span { margin-left: 10px; font-size: 13px; }
```
FILE: app.js
```js
const LETTERS = 'ABCDEFGHIJKLMNO'.split('');
const CITIES = ['北京', '上海', '广州', '深圳'];
const GDP = [33106, 36011.8, 22859.35, 24221.98];
const PEOPLE = [1375.8, 1462.38, 927.69, 454.7];
const PREV = ['29883', '32925', '21503.15', '22490.06'];
const GROWTH = ['10.8', '9.4', '6.3', '7.7'];
const SHIFT = ['89.2', '90.6', '93.7', '92.3'];
const HEADS = ['地区', 'GDP(亿\n元)', '人口(万)', '前期GDP\n(亿元)', 'GDP\n增长率', '偏移量'];
const pct = v => `${v}<span class="pct">%</span>`;

/* worksheet */
document.getElementById('cols').innerHTML =
  '<col class="c-head">' + LETTERS.map(() => '<col>').join('') + '<col class="c-last">';
document.getElementById('letters').innerHTML =
  '<th><svg width="16" height="16"><path d="M16 0v16H0z" fill="#b8b8b8"/></svg></th>' +
  LETTERS.map(l => `<th class="${l === 'N' ? 'on' : ''}">${l}</th>`).join('') + '<th></th>';

let body = '';
for (let r = 4; r <= 31; r++) {
  let cells = [];
  if (r === 4) cells = HEADS.map((h, i) => `<td class="hd${i < 2 ? ' left' : ''}">${h}</td>`);
  if (r > 4 && r < 9) {
    const i = r - 5;
    cells = [
      `<td class="city">${CITIES[i]}</td>`, `<td class="song">${GDP[i]}</td>`,
      ...[PEOPLE[i], PREV[i], pct(GROWTH[i]), pct(SHIFT[i])].map(v => `<td class="num">${v}</td>`)
    ];
  }
  for (let c = cells.length; c < 16; c++) cells.push(`<td${r === 21 && c === 13 ? ' class="sel"' : ''}></td>`);
  body += `<tr${r === 4 ? ' class="head"' : ''}><th class="${r === 21 ? 'on' : ''}">${r}</th>${cells.join('')}</tr>`;
}
document.getElementById('rows').innerHTML = body;

/* doughnut charts */
const defs = id => `<defs>
  <radialGradient id="${id}bg" cx="50%" cy="50%" r="74%"><stop offset="0" stop-color="#595959"/><stop offset=".5" stop-color="#484848"/><stop offset="1" stop-color="#262626"/></radialGradient>
  ${[['#77a8db', '#5b9dd9', '#4a8dc8'], ['#ed8350', '#ec722b', '#dc6418'], ['#b0b0b0', '#a5a5a3', '#929290'], ['#fccb4c', '#f9cd12', '#e6c000']]
    .map((c, i) => `<linearGradient id="${id}g${i}" x2="0" y2="1"><stop offset="0" stop-color="${c[0]}"/><stop offset=".5" stop-color="${c[1]}"/><stop offset="1" stop-color="${c[2]}"/></linearGradient>`).join('')}
  <filter id="${id}sh" x="-10%" y="-10%" width="120%" height="120%"><feDropShadow dx="0" dy="4" stdDeviation="4" flood-opacity=".6"/></filter>
</defs><rect width="100%" height="100%" fill="url(#${id}bg)"/>`;

function ring(values, cx, cy, inner, outer, paint, line) {
  const total = values.reduce((a, b) => a + b);
  const at = (a, r) => `${(cx + r * Math.sin(a)).toFixed(2)} ${(cy - r * Math.cos(a)).toFixed(2)}`;
  let a0 = 0;
  return values.map((v, i) => {
    const a1 = a0 + v / total * 2 * Math.PI;
    const big = a1 - a0 > Math.PI ? 1 : 0;
    const d = `M${at(a0, inner)}L${at(a0, outer)}A${outer} ${outer} 0 ${big} 1 ${at(a1, outer)}L${at(a1, inner)}A${inner} ${inner} 0 ${big} 0 ${at(a0, inner)}z`;
    a0 = a1;
    return `<path d="${d}" fill="${paint(i)}" stroke="${line}" stroke-width="2"/>`;
  }).join('');
}
const label = (x, y, s, cls = 't-label') => `<text x="${x}" y="${y}" class="${cls}">${s}</text>`;

document.getElementById('chart1').innerHTML = defs('a') +
  `<g filter="url(#ash)">${ring(GDP, 320, 320, 130, 260, i => `url(#ag${i})`, '#f6f2ec')}</g>
  <circle cx="320" cy="320" r="129" fill="#74ba4a" stroke="#f0fbdc" stroke-width="2"/>` +
  label(502, 185, '北京') + label(411, 543, '上海') + label(99, 406, '广州') + label(174, 143, '深圳') +
  label(320, 312, '主要城市', 't-core') + label(320, 360, 'GDP', 't-core');

const OUTER = ['#4e7797', '#a0592f', '#7b7b7b', '#af9017'];
document.getElementById('chart2').innerHTML = defs('b') +
  `<g filter="url(#bsh)">${ring(PEOPLE, 322, 351, 170, 271, i => OUTER[i], '#efe9e2')}${ring(GDP, 322, 351, 68, 170, i => `url(#bg${i})`, '#f6f2ec')}</g>` +
  label(321, 45, '主要城市GDP与人口比例', 't-title') +
  label(415, 283, '北京') + label(367, 467, '上海') + label(211, 398, '广州') + label(250, 262, '深圳') +
  label(322, 255, 'GDP', 't-mini') +
  `<path d="M315 237h4l2 1 2-1h4v2h-4l-1 1v13l1 1h4v2h-4l-2-1-2 1h-4v-2h4l1-1v-13l-1-1h-4z" fill="#8fb86a" stroke="#111" stroke-width="1"/>`;
```
